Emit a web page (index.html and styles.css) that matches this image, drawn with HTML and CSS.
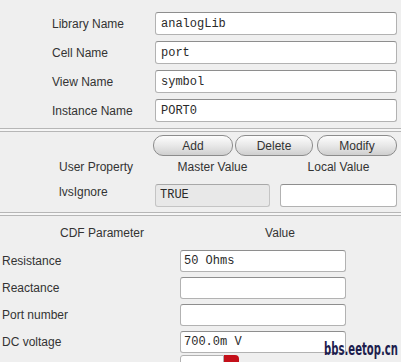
FILE: index.html
```
<!DOCTYPE html>
<html lang="en">
<head>
  <meta charset="UTF-8">
  <title>Edit Object Properties</title>
  <link rel="stylesheet" href="styles.css">
</head>
<body>
  <div class="form">
    <div class="cut-title">Property</div>

    <div class="props">
      <label>Library Name</label>
      <input class="field" type="text" value="analogLib">
      <label>Cell Name</label>
      <input class="field" type="text" value="port">
      <label>View Name</label>
      <input class="field" type="text" value="symbol">
      <label>Instance Name</label>
      <input class="field" type="text" value="PORT0">
    </div>

    <div class="separator"></div>

    <div class="user-props">
      <div class="button-row">
        <button class="pill btn-add">Add</button>
        <button class="pill btn-delete">Delete</button>
        <button class="pill btn-modify">Modify</button>
      </div>
      <div class="user-grid">
        <span class="head-left">User Property</span>
        <span class="head">Master Value</span>
        <span></span>
        <span class="head">Local Value</span>

        <label class="user-label">lvsIgnore</label>
        <input class="field readonly" type="text" value="TRUE" readonly>
        <span></span>
        <input class="field" type="text" value="">
      </div>
    </div>

    <div class="separator"></div>

    <div class="cdf">
      <div class="cdf-head">
        <span class="cdf-name">CDF Parameter</span>
        <span class="cdf-value">Value</span>
      </div>
      <div class="cdf-grid">
        <label>Resistance</label>
        <input class="field small" type="text" value="50 Ohms">
        <label>Reactance</label>
        <input class="field small" type="text" value="">
        <label>Port number</label>
        <input class="field small" type="text" value="">
        <label>DC voltage</label>
        <input class="field small" type="text" value="700.0m V">
        <label></label>
        <div class="cyclic"><span class="cyclic-box"></span><span class="cyclic-arrow"></span></div>
      </div>
    </div>

    <div class="watermark">bbs.eetop.cn</div>
  </div>
</body>
</html>
```

FILE: styles.css
```
html, body {
  margin: 0;
  padding: 0;
  background-color: #efefef;
  overflow: hidden;
}
body {
  font-family: "Liberation Sans", Arial, sans-serif;
  font-size: 12px;
  color: #333;
}
.form {
  position: relative;
  width: 401px;
  height: 362px;
  overflow: hidden;
}
.cut-title {
  margin-top: -14px;
  height: 14px;
  line-height: 14px;
  padding-left: 56px;
}
label {
  display: block;
  line-height: 14px;
}
.field {
  box-sizing: border-box;
  display: block;
  width: 100%;
  height: 23px;
  margin: 0;
  padding: 0 5px;
  font-family: "Liberation Mono", "Courier New", monospace;
  font-size: 12px;
  color: #2a2a2a;
  background-color: #fff;
  border: 1px solid #b2b2b2;
  border-top-color: #8e8e8e;
  border-radius: 3px;
  outline: none;
}
.field.readonly {
  background-color: #e8e8e8;
  border-color: #c4c4c4;
  border-top-color: #a8a8a8;
  padding-left: 4px;
}
.field.small {
  height: 22px;
  padding-left: 3px;
}

/* instance section */
.props {
  display: grid;
  grid-template-columns: 103px 1fr;
  row-gap: 6px;
  align-items: center;
  padding: 12px 4px 0 52px;
}
.separator {
  margin-top: 6px;
  height: 2px;
  border-top: 1px solid #b6b6b6;
  border-bottom: 1px solid #b6b6b6;
  background-color: #f6f6f6;
}

/* user property section */
.user-props {
  padding-top: 3px;
}
.button-row {
  display: flex;
  padding-left: 153px;
}
.pill {
  box-sizing: border-box;
  height: 21px;
  padding: 0;
  font-family: "Liberation Sans", Arial, sans-serif;
  font-size: 12px;
  color: #333;
  border: 1px solid #8c8c8c;
  border-radius: 10px;
  background: linear-gradient(#fdfdfd, #e6e6e6 55%, #cfcfcf);
  cursor: pointer;
}
.btn-add {
  width: 80px;
}
.btn-delete {
  width: 78px;
  margin-left: 2px;
}
.btn-modify {
  width: 80px;
  margin-left: 4px;
}
.user-grid {
  display: grid;
  grid-template-columns: 96px 115px 10px 117px;
  grid-template-rows: 22px 22px;
  row-gap: 6px;
  align-items: center;
  padding-left: 59px;
}
.head {
  text-align: center;
}
.user-label {
  align-self: start;
  padding-top: 1px;
}

/* cdf section */
.cdf-head {
  display: flex;
  height: 18px;
  line-height: 18px;
  padding-top: 8px;
}
.cdf-name {
  width: 204px;
  text-align: center;
}
.cdf-value {
  width: 152px;
  text-align: center;
}
.cdf-grid {
  display: grid;
  grid-template-columns: 178px 166px;
  row-gap: 5px;
  align-items: center;
  padding: 8px 0 0 2px;
}
.cyclic {
  display: flex;
  height: 20px;
  margin-top: -3px;
}
.cyclic-box {
  box-sizing: border-box;
  width: 44px;
  background-color: #fff;
  border: 1px solid #b2b2b2;
  border-radius: 3px 0 0 3px;
}
.cyclic-arrow {
  width: 15px;
  background-color: #c4101a;
  border-radius: 0 4px 4px 0;
}

.watermark {
  position: absolute;
  right: 3px;
  bottom: 4px;
  font-family: "DejaVu Sans", sans-serif;
  font-weight: bold;
  font-size: 18px;
  line-height: 18px;
  color: #1d1d4d;
  transform: scaleX(0.56);
  transform-origin: right center;
}
```
